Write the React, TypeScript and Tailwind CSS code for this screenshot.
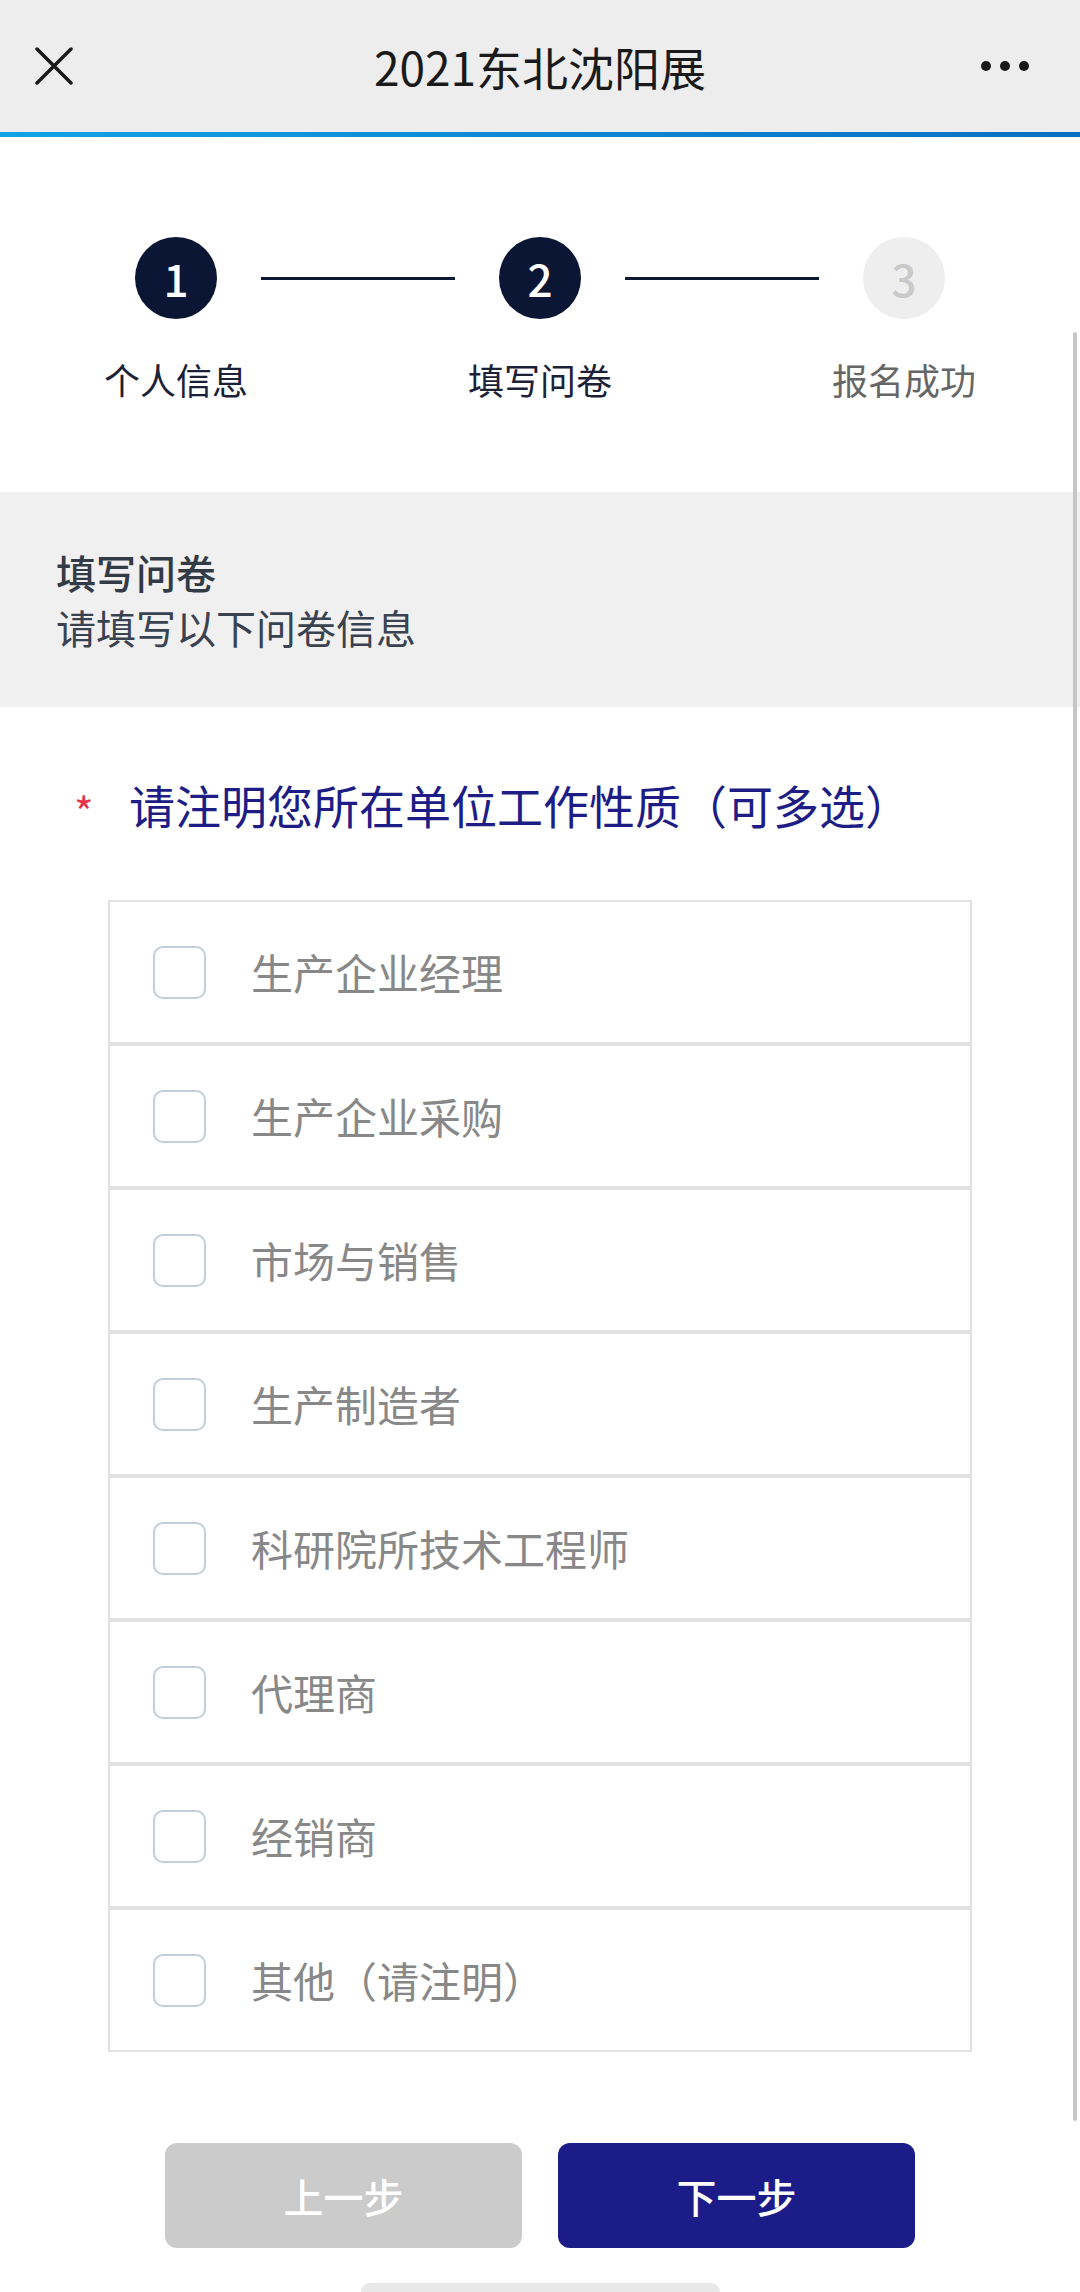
import React from 'react';

const OPTIONS = [
  '生产企业经理',
  '生产企业采购',
  '市场与销售',
  '生产制造者',
  '科研院所技术工程师',
  '代理商',
  '经销商',
  '其他（请注明）',
];

const STEPS = [
  { n: 1, label: '个人信息', done: true },
  { n: 2, label: '填写问卷', done: true },
  { n: 3, label: '报名成功', done: false },
];

function Step({ n, label, done }: { n: number; label: string; done: boolean }) {
  return (
    <div className="flex w-[120px] flex-col items-center">
      <div
        className={[
          'flex h-[82px] w-[82px] items-center justify-center rounded-full text-[44px] font-medium leading-none',
          done ? 'bg-[#0b1534] text-white' : 'bg-[#eeeeee] text-[#c9c9c9]',
        ].join(' ')}
      >
        {n}
      </div>
      <div
        className={[
          'mt-[35px] whitespace-nowrap text-[36px] leading-[50px]',
          done ? 'text-[#1b2136]' : 'text-[#666666]',
        ].join(' ')}
      >
        {label}
      </div>
    </div>
  );
}

export default function App() {
  return (
    <div
      className="relative h-[2292px] w-[1080px] overflow-hidden bg-white"
      style={{ fontFamily: '"Noto Sans CJK SC", "Noto Sans", sans-serif' }}
    >
      {/* top bar */}
      <div className="flex h-[132px] items-center bg-[#ededed]">
        <div className="flex w-[200px] pl-[35px]">
          <svg width="38" height="38" viewBox="0 0 38 38" fill="none">
            <path d="M2 2L36 36M36 2L2 36" stroke="#1a1a1a" strokeWidth="3.5" strokeLinecap="round" />
          </svg>
        </div>
        <div className="flex-1 text-center text-[46px] leading-none text-[#1a1a1a]">2021东北沈阳展</div>
        <div className="flex w-[200px] justify-end gap-[9px] pr-[51px]">
          <span className="h-[10px] w-[10px] rounded-full bg-[#1a1a1a]" />
          <span className="h-[10px] w-[10px] rounded-full bg-[#1a1a1a]" />
          <span className="h-[10px] w-[10px] rounded-full bg-[#1a1a1a]" />
        </div>
      </div>
      <div className="h-[5px] bg-linear-to-r from-[#13a2e6] to-[#0b6fc2]" />

      {/* stepper */}
      <div className="flex items-start justify-center pt-[100px]">
        <Step {...STEPS[0]} />
        <div className="mx-[25px] mt-[40px] h-[3px] w-[194px] bg-[#0d1836]" />
        <Step {...STEPS[1]} />
        <div className="mx-[25px] mt-[40px] h-[3px] w-[194px] bg-[#0d1836]" />
        <Step {...STEPS[2]} />
      </div>

      {/* section header */}
      <div className="mt-[88px] bg-[#f0f0f0] pb-[52px] pl-[56px] pt-[53px] text-[40px] leading-[55px]">
        <div className="font-medium text-[#323a46]">填写问卷</div>
        <div className="text-[#3a4250]">请填写以下问卷信息</div>
      </div>

      {/* question */}
      <div className="mt-[67px] flex items-center pl-[74px]">
        <span className="w-[55px] pt-[14px] text-[42px] leading-none text-[#e2354b]">*</span>
        <span className="text-[46px] leading-[60px] text-[#1d1d85]">请注明您所在单位工作性质（可多选）</span>
      </div>

      {/* options */}
      <div className="mt-[66px] flex flex-col px-[108px]">
        {OPTIONS.map((opt) => (
          <label
            key={opt}
            className="flex h-[144px] items-center border-2 border-[#e1e1e1] pl-[43px]"
          >
            <span className="h-[53px] w-[53px] shrink-0 rounded-[10px] border-2 border-[#c3cedb] bg-white" />
            <span className="ml-[45px] text-[42px] leading-none text-[#888888]">{opt}</span>
          </label>
        ))}
      </div>

      {/* buttons */}
      <div className="mt-[91px] flex justify-center gap-[36px]">
        <button
          type="button"
          className="h-[105px] w-[357px] rounded-[12px] bg-[#cbcbcb] text-[40px] font-medium text-white"
        >
          上一步
        </button>
        <button
          type="button"
          className="h-[105px] w-[357px] rounded-[12px] bg-[#1b1c88] text-[40px] font-medium text-white"
        >
          下一步
        </button>
      </div>

      <div className="mx-auto mt-[35px] h-[18px] w-[359px] rounded-full bg-[#e8e8e8]" />

      {/* scroll indicator */}
      <div className="absolute right-[3px] top-[332px] h-[1789px] w-[4px] rounded-full bg-[#c6c6c6]" />
    </div>
  );
}
